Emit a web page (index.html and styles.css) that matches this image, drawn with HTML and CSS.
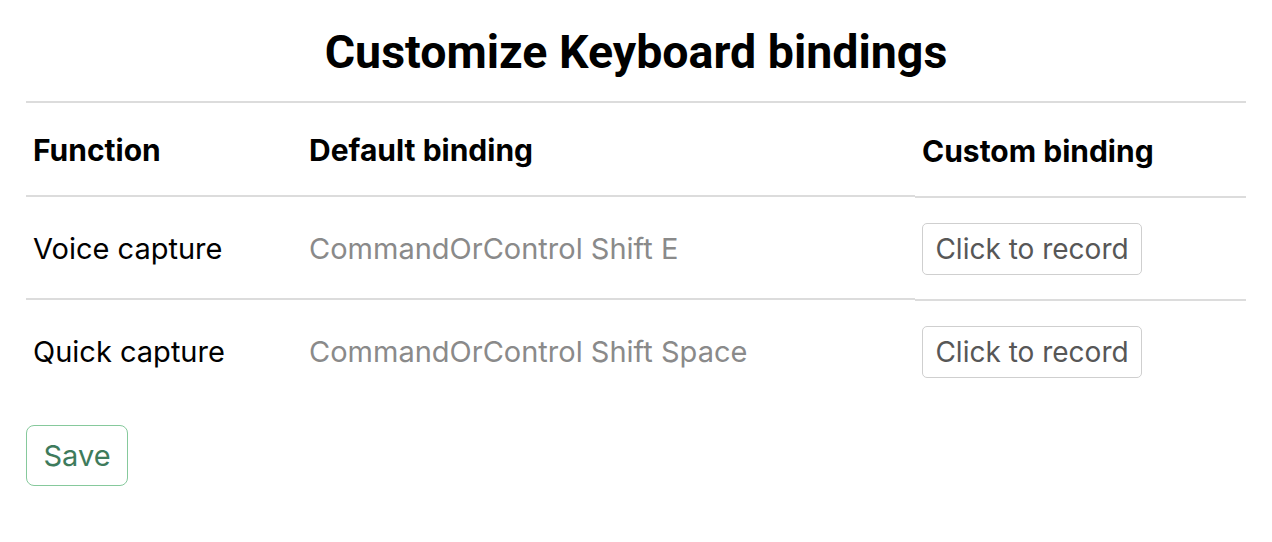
FILE: index.html
```html
<!DOCTYPE html>
<html>
<head>
<meta charset="utf-8">
<link rel="stylesheet" href="styles.css">
</head>
<body>
<div class="page">
  <h1 class="title">Customize Keyboard bindings</h1>
  <table class="bindings">
    <colgroup>
      <col class="c1"><col class="c2"><col class="c3">
    </colgroup>
    <thead>
      <tr>
        <th>Function</th>
        <th>Default binding</th>
        <th class="custom">Custom binding</th>
      </tr>
    </thead>
    <tbody>
      <tr>
        <td class="fn">Voice capture</td>
        <td class="def">CommandOrControl Shift E</td>
        <td class="custom"><button class="record">Click to record</button></td>
      </tr>
      <tr class="last">
        <td class="fn">Quick capture</td>
        <td class="def">CommandOrControl Shift Space</td>
        <td class="custom"><button class="record">Click to record</button></td>
      </tr>
    </tbody>
  </table>
  <button class="save">Save</button>
</div>
</body>
</html>
```

FILE: styles.css
```css
html, body {
  margin: 0;
  padding: 0;
  background: #fff;
}

.page {
  padding: 0 26px;
  font-family: "Inter", "Liberation Sans", sans-serif;
  color: #000;
}

.title {
  margin: 0;
  height: 101px;
  line-height: 104px;
  text-align: center;
  font-family: "Roboto", "Liberation Sans", sans-serif;
  font-weight: 700;
  font-size: 46.5px;
}

.bindings {
  width: 1220px;
  border-collapse: separate;
  border-spacing: 0;
  border-top: 2px solid #dcdcdc;
  table-layout: fixed;
}

.c1 { width: 276px; }
.c2 { width: 613px; }
.c3 { width: 331px; }

.bindings th,
.bindings td {
  text-align: left;
  padding: 0 7px;
  background: linear-gradient(to top, transparent 1px, #dcdcdc 1px, #dcdcdc 3px, transparent 3px) no-repeat bottom / 100% 3px;
}

.bindings th.custom,
.bindings td.custom {
  background: linear-gradient(to top, #dcdcdc 2px, transparent 2px) no-repeat bottom / 100% 2px;
}

.bindings .last td,
.bindings .last td.custom {
  background: none;
}

.bindings th {
  height: 94px;
  padding-bottom: 1px;
  font-size: 30px;
  font-weight: 700;
}

.bindings th.custom {
  padding-top: 1px;
  padding-bottom: 0;
}

.bindings td {
  height: 100px;
  padding-bottom: 3px;
  font-size: 29px;
}

.bindings td.custom {
  height: 102px;
  padding-bottom: 1px;
}

.bindings td.fn {
  color: #000;
}

.bindings td.def {
  color: #8a8a8a;
}

.record {
  display: block;
  width: 220px;
  height: 52px;
  padding: 0;
  border: 1px solid #cfcfcf;
  border-radius: 5px;
  background: #fff;
  color: #575757;
  font-family: "Inter", "Liberation Sans", sans-serif;
  font-size: 28px;
  text-align: center;
}

.save {
  display: block;
  margin-top: 21px;
  width: 102px;
  height: 61px;
  padding: 0;
  border: 1px solid #86c99c;
  border-radius: 8px;
  background: #fff;
  color: #3e7b5c;
  font-family: "Inter", "Liberation Sans", sans-serif;
  font-size: 29px;
}
```
